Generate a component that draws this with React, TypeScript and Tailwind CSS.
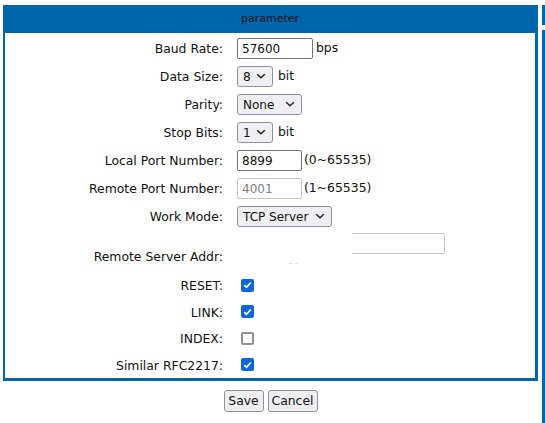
import React from 'react';

const font = { fontFamily: '"DejaVu Sans", Verdana, sans-serif' };

function Chevron() {
  return (
    <svg width="10" height="6" viewBox="0 0 10 6" className="shrink-0">
      <path d="M1.2 1.2 L5 4.8 L8.8 1.2" fill="none" stroke="#222" strokeWidth="1.5" />
    </svg>
  );
}

function Select({ value, width }: { value: string; width: string }) {
  return (
    <div
      className={`${width} h-[21px] flex items-center justify-between pl-[5px] pr-[6px] bg-[#efeff2] border border-[#8f8f9d] rounded-[3px] text-[12px] text-[#111]`}
    >
      <span className="mt-[1px]">{value}</span>
      <Chevron />
    </div>
  );
}

function TextBox({ value, width, disabled }: { value: string; width: string; disabled?: boolean }) {
  return (
    <div
      className={`${width} h-[21px] flex items-center pl-[4px] pt-[2px] bg-white border rounded-[2px] text-[12px] ${
        disabled ? 'border-[#c6c6cc] text-[#808080]' : 'border-[#767676] text-[#111]'
      }`}
    >
      {value}
    </div>
  );
}

function Check({ on }: { on: boolean }) {
  if (!on) {
    return <div className="ml-[4px] w-[13px] h-[13px] rounded-[2px] border-2 border-[#8f8f9d] bg-white" />;
  }
  return (
    <div className="ml-[4px] w-[13px] h-[13px] rounded-[2px] bg-[#0f66d9] flex items-center justify-center">
      <svg width="9" height="8" viewBox="0 0 9 8">
        <path d="M1.2 4.2 L3.5 6.3 L7.8 1.5" fill="none" stroke="#fff" strokeWidth="1.7" />
      </svg>
    </div>
  );
}

function Row({ label, children, h = 'h-[28px]' }: { label: string; children: React.ReactNode; h?: string }) {
  return (
    <div className={`flex items-center ${h}`}>
      <div className="w-[218px] text-right mt-[3px]">{label}</div>
      <div className="ml-[14px] flex items-center">{children}</div>
    </div>
  );
}

export default function App() {
  return (
    <div className="w-[545px] h-[423px] bg-white flex pt-[5px] text-[12.4px] text-[#111]" style={font}>
      <div className="flex flex-col">
        <div className="ml-[3px] w-[535px] bg-[#0066ab] pl-[2px] pr-[3px] pb-[3px]">
          <div className="h-[28px] flex items-center justify-center text-[11px] text-[#111]">parameter</div>
          <div className="bg-white pt-[1px]">
            <Row label="Baud Rate:">
              <TextBox value="57600" width="w-[76px]" />
              <span className="ml-[3px]">bps</span>
            </Row>
            <Row label="Data Size:">
              <Select value="8" width="w-[36px]" />
              <span className="ml-[5px]">bit</span>
            </Row>
            <Row label="Parity:">
              <Select value="None" width="w-[65px]" />
            </Row>
            <Row label="Stop Bits:">
              <Select value="1" width="w-[36px]" />
              <span className="ml-[5px]">bit</span>
            </Row>
            <Row label="Local Port Number:">
              <TextBox value="8899" width="w-[65px]" />
              <span className="ml-[2px]">(0~65535)</span>
            </Row>
            <Row label="Remote Port Number:">
              <TextBox value="4001" width="w-[65px]" disabled />
              <span className="ml-[2px]">(1~65535)</span>
            </Row>
            <Row label="Work Mode:">
              <Select value="TCP Server" width="w-[95px]" />
            </Row>
            <div className="flex items-start h-[42px]">
              <div className="w-[218px] text-right pt-[18px]">Remote Server Addr:</div>
              <div className="ml-[14px] pt-[3px] flex flex-col">
                <div className="ml-[115px] w-[93px] h-[21px] border border-l-0 border-[#c6c6cc] rounded-r-[2px] bg-white" />
                <span className="ml-[52px] mt-[5px] text-[9px] leading-[9px] text-[#c8c8c8]">- -</span>
              </div>
            </div>
            <Row label="RESET:" h="h-[26.5px]">
              <Check on />
            </Row>
            <Row label="LINK:" h="h-[26.5px]">
              <Check on />
            </Row>
            <Row label="INDEX:" h="h-[26.5px]">
              <Check on={false} />
            </Row>
            <Row label="Similar RFC2217:" h="h-[26.5px]">
              <Check on />
            </Row>
          </div>
        </div>
        <div className="mt-[9px] ml-[3px] w-[535px] flex justify-center gap-[4px]">
          <button className="w-[40px] h-[22px] bg-[#efeff2] border border-[#8f8f9d] rounded-[3px] text-[12.4px]">
            Save
          </button>
          <button className="w-[50px] h-[22px] bg-[#efeff2] border border-[#8f8f9d] rounded-[3px] text-[12.4px]">
            Cancel
          </button>
        </div>
      </div>
      <div className="ml-[4px] w-[3px] flex flex-col">
        <div className="h-[20px] bg-[#0066ab]" />
        <div className="mt-[5px] flex-1 bg-[#0066ab]" />
      </div>
    </div>
  );
}
